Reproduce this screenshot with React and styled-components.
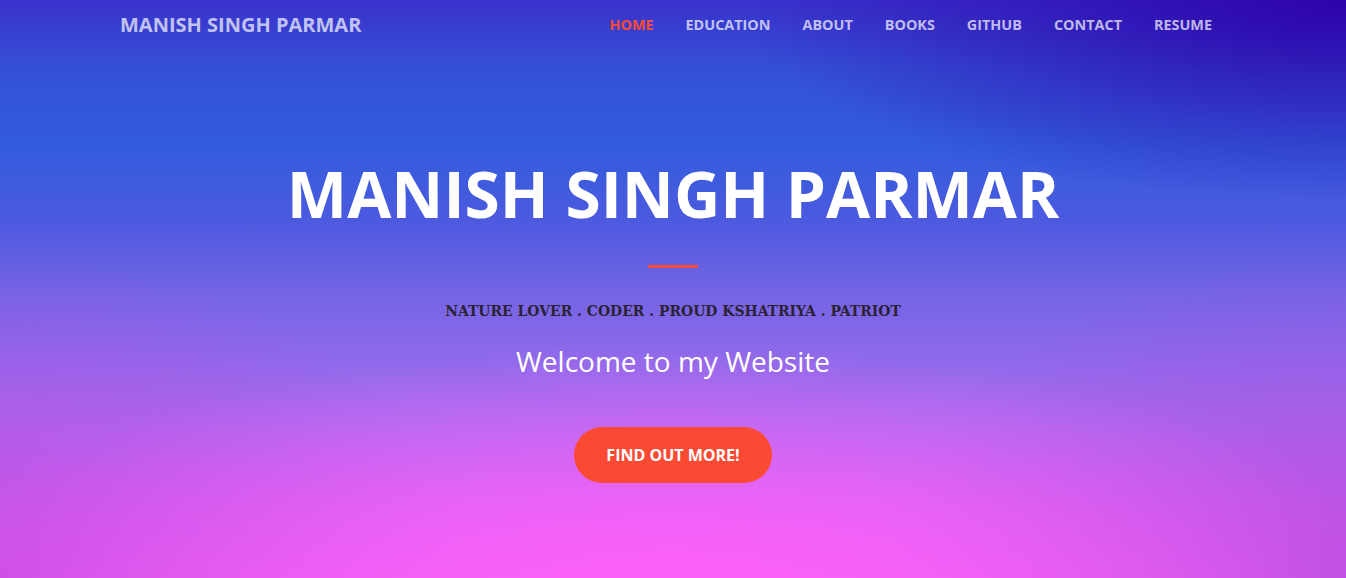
import React from "react";
import styled, { createGlobalStyle } from "styled-components";

const GlobalStyle = createGlobalStyle`
  html, body {
    margin: 0;
    padding: 0;
  }
  body {
    font-family: "Open Sans", "Liberation Sans", sans-serif;
  }
  * {
    box-sizing: border-box;
  }
`;

const accent = "#fb4a33";

const Page = styled.div`
  height: 100vh;
  overflow: hidden;
  display: flex;
  flex-direction: column;
  background:
    radial-gradient(ellipse 45% 35% at 100% 0%, rgba(44, 0, 168, 0.95), rgba(44, 0, 168, 0) 100%),
    radial-gradient(ellipse 55% 40% at 50% 100%, rgba(255, 96, 250, 0.9), rgba(255, 96, 250, 0) 100%),
    radial-gradient(ellipse 35% 55% at 0% 100%, rgba(190, 70, 225, 0.7), rgba(190, 70, 225, 0) 100%),
    radial-gradient(ellipse 35% 55% at 100% 100%, rgba(170, 70, 220, 0.7), rgba(170, 70, 220, 0) 100%),
    linear-gradient(
      to bottom,
      #3a32cc 0%,
      #3450d6 12%,
      #325cdc 25%,
      #4c5ae0 38%,
      #7264e4 50%,
      #8e6aea 62%,
      #ac6cf0 74%,
      #d064f0 88%,
      #e862f2 100%
    );
`;

const Navbar = styled.nav`
  width: 1140px;
  margin: 0 auto;
  padding: 0 15px;
  height: 48px;
  display: flex;
  align-items: center;
  justify-content: space-between;
`;

const Brand = styled.a`
  font-weight: 700;
  font-size: 20px;
  color: rgba(255, 255, 255, 0.7);
  text-decoration: none;
  padding-left: 2px;
`;

const NavList = styled.ul`
  list-style: none;
  display: flex;
  margin: 0;
  padding: 0;
`;

const NavLink = styled.a`
  display: block;
  padding: 0 16px;
  font-size: 14.4px;
  font-weight: 700;
  text-transform: uppercase;
  text-decoration: none;
  color: ${props => (props.$active ? accent : "rgba(255, 255, 255, 0.7)")};
`;

const Masthead = styled.header`
  flex: 1;
  display: flex;
  flex-direction: column;
  align-items: center;
  text-align: center;
  padding-top: 108px;
`;

const Title = styled.h1`
  margin: 0;
  font-size: 64px;
  line-height: 1.2;
  font-weight: 700;
  color: #fff;
  text-transform: uppercase;
`;

const Divider = styled.hr`
  width: 50px;
  height: 3px;
  margin: 32px 0 0;
  border: 0;
  background: ${accent};
`;

const Tagline = styled.p`
  margin: 31px 0 0;
  font-family: "DejaVu Serif Condensed", "DejaVu Serif", "Liberation Serif", serif;
  font-stretch: condensed;
  font-weight: 700;
  font-size: 15.5px;
  line-height: 1.5;
  color: #2a2232;
`;

const Welcome = styled.p`
  margin: 18px 0 0;
  font-size: 28px;
  line-height: 1.5;
  font-weight: 400;
  color: #fff;
`;

const Button = styled.a`
  margin-top: 45px;
  display: inline-block;
  padding: 17px 32px;
  border-radius: 300px;
  background: ${accent};
  color: #fff;
  font-size: 16px;
  line-height: 22px;
  font-weight: 700;
  text-transform: uppercase;
  text-decoration: none;
`;

const links = ["Home", "Education", "About", "Books", "Github", "Contact", "Resume"];

export default function App() {
  return (
    <>
      <GlobalStyle />
      <Page>
        <Navbar>
          <Brand href="#">MANISH SINGH PARMAR</Brand>
          <NavList>
            {links.map((l, i) => (
              <li key={l}>
                <NavLink href="#" $active={i === 0}>{l}</NavLink>
              </li>
            ))}
          </NavList>
        </Navbar>
        <Masthead>
          <Title>Manish Singh Parmar</Title>
          <Divider />
          <Tagline>NATURE LOVER . CODER . PROUD KSHATRIYA . PATRIOT</Tagline>
          <Welcome>Welcome to my Website</Welcome>
          <Button href="#">Find Out More!</Button>
        </Masthead>
      </Page>
    </>
  );
}
